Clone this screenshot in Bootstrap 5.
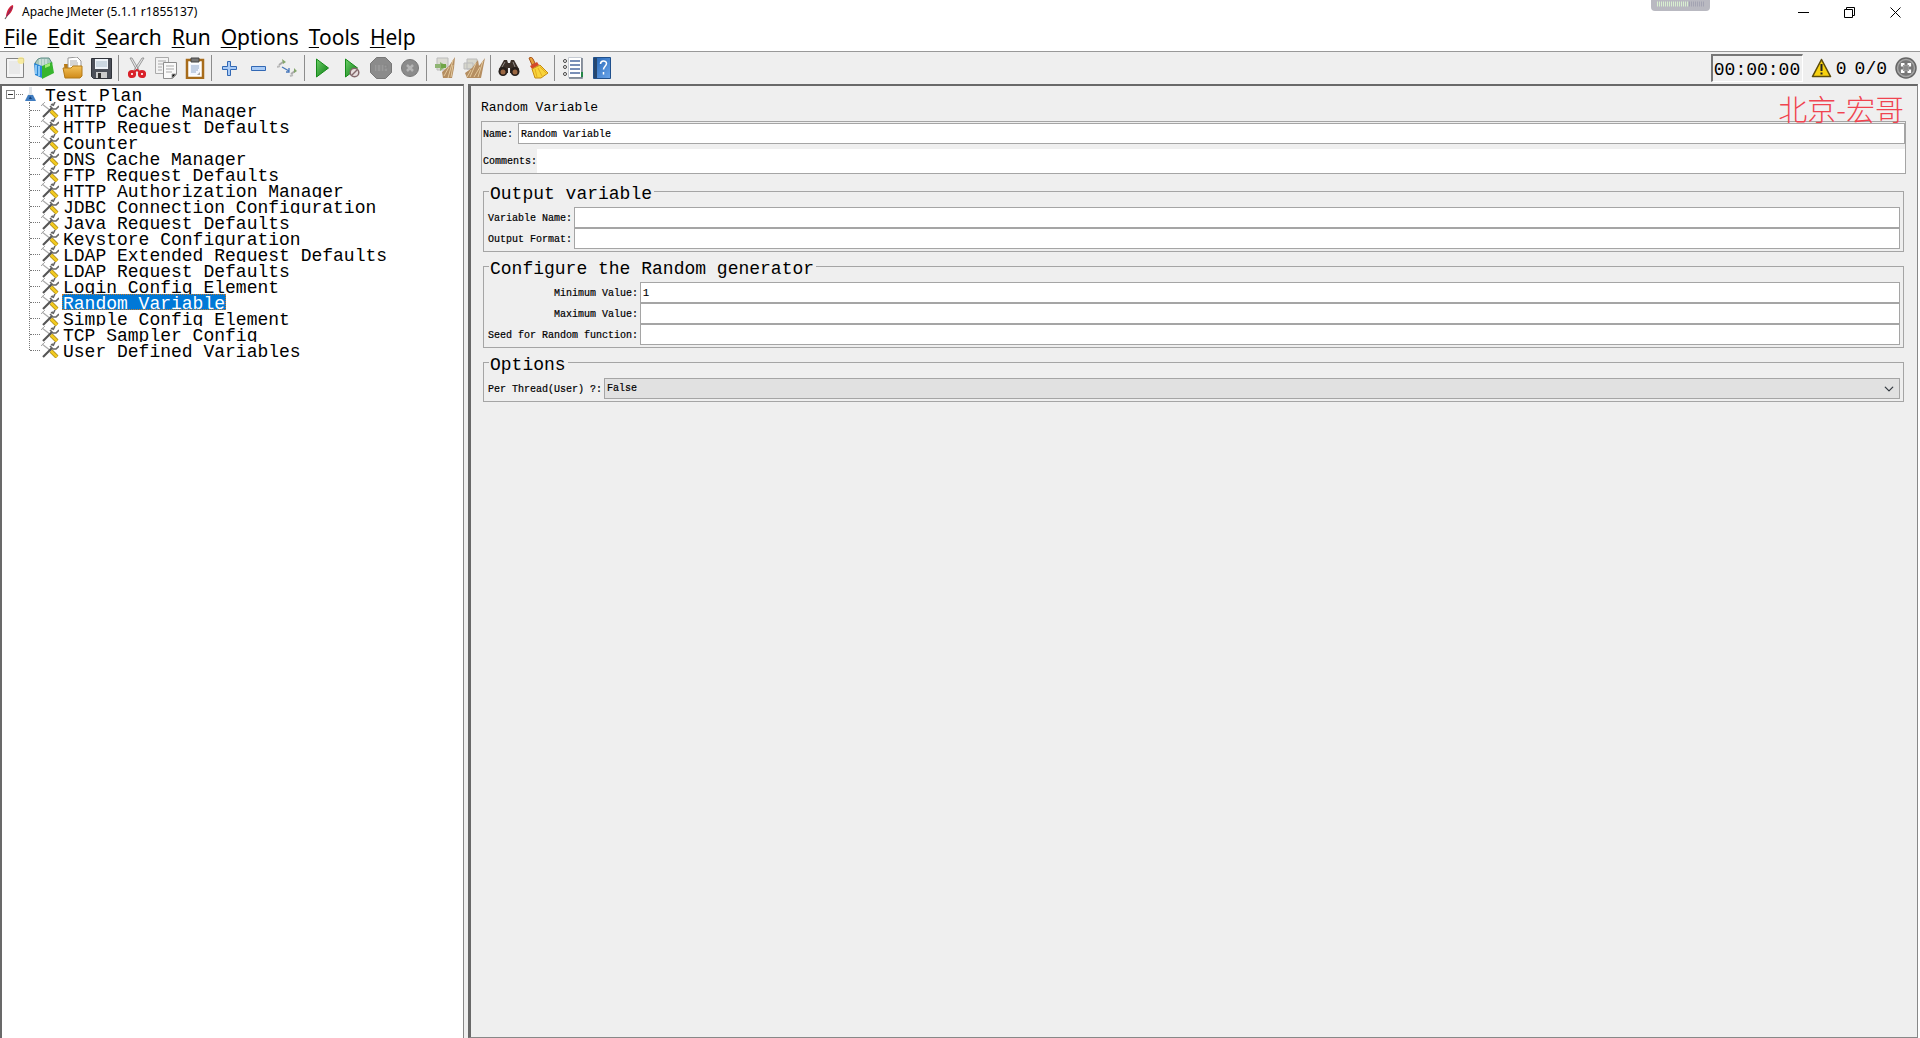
<!DOCTYPE html>
<html lang="en">
<head>
<meta charset="utf-8">
<meta name="viewport" content="width=device-width, initial-scale=1">
<title>Apache JMeter (5.1.1 r1855137)</title>
<link href="https://cdn.jsdelivr.net/npm/bootstrap@5.3.0/dist/css/bootstrap.min.css" rel="stylesheet">
<style>
:root{--face:#efefef;--edge:#a5a5a5;--shade:#696969}
body{font-family:"Noto Sans","Open Sans",sans-serif;color:#000;background:#fff;line-height:1}
.mono{font-family:"Liberation Mono","Noto Sans CJK SC",monospace}
svg{display:block;flex:none}
.titlebar{height:24px;font-size:12px;padding:0 2px 0 4px}
.title-text{padding-left:6px}
.win-btn{width:46px;height:20px;background:none;border:0;padding:0}
.gauge{position:absolute;top:0;right:210px;width:59px;height:11px;background:#b9b9c1;border-radius:0 0 4px 4px}
.menubar{height:28px;font-size:21px;border-bottom:1px solid #999;padding-left:4px;gap:10px}
.menubar a{color:#000;text-decoration:none;line-height:26px}
.menubar u{text-underline-offset:2px;text-decoration-thickness:1px}
.toolbar{height:32px;background:var(--face)}
.tool{width:29px;height:32px;background:none;border:0;padding:0}
.split{width:1px;height:26px;background:#8c8c8c;margin:0 3px 0 2px}
.clock{height:28px;width:92px;line-height:28px;padding-left:1px;font-size:18px;border:solid;border-width:2px 1px 1px 2px;border-color:#777 #fff #fff #777}
.status{font-size:18px;padding-right:3px}
.status-count{line-height:22px;padding-top:2px}
.tree-pane{width:464px;border-top:2px solid var(--shade);border-left:2px solid var(--shade);border-right:1px solid #888;background:#fff}
.gutter{width:4px;background:var(--face)}
.tree{font-size:18px;margin:0;padding:0;list-style:none}
.tree-row{height:16px;overflow:hidden;display:flex;align-items:center}
.tree-label{height:16px;line-height:20px;white-space:nowrap;padding:0 1px}
.kids{margin:0 0 0 28px;padding:0;list-style:none;position:relative}
.kids::before{content:"";position:absolute;left:-1px;top:0;bottom:8px;border-left:1px dotted #777}
.kids .tree-row::before{content:"";width:10px;border-top:1px dotted #777;margin-right:1px}
.kids .tree-label{margin-left:3px}
.picked{background:#0078d7;color:#fff;outline:1px dotted #c77a2a;outline-offset:-1px}
.expander{width:9px;height:9px;border:1px solid #848484;background:#fff;padding:0;margin-left:4px}
.stub{width:7px;border-top:1px dotted #777;margin:0 2px 0 1px}
.editor{border:solid;border-width:2px 1px 1px 3px;border-color:var(--shade) #888 #888 var(--shade);margin-right:2px;background:var(--face);padding:0 11px 0 10px;font-size:10px}
.editor-head{font-size:13px;height:35px;line-height:20px;padding-top:12px;font-weight:400;margin:0}
.author{position:absolute;top:6px;right:13px;font-size:29px;line-height:32px;color:#f04450;font-weight:300;font-family:"Noto Sans CJK SC",sans-serif}
.ident{border:1px solid var(--edge);height:53px;background:var(--face)}
.ident label,.pairs label{padding:2px 0 0 1px;-webkit-text-stroke:.2px #000}
.ident input,.pairs input,.pairs select{font:inherit;color:#000;border-radius:0;border:1px solid var(--edge);padding:1px 0 0 2px;min-height:0;height:21px;line-height:18px;background-color:#fff;-webkit-text-stroke:.2px #000}
.ident .remark{border:0;height:24px}
.name-row{padding-top:1px}
.name-row label{padding-right:5px}
.group{border:1px solid var(--edge);margin:6px 2px 0;padding:5px 3px 2px 4px}
.group+.group{margin-top:3px}
.group legend{float:none;width:auto;font-size:18px;line-height:28px;height:22px;margin:0 0 0 1px;padding:0 2px 0 1px}
.pairs{display:grid;grid-template-columns:auto 1fr;align-items:center;text-align:right;column-gap:2px}
.pairs label{padding-left:0}
.pairs select{background-color:#e1e1e1;background-size:10px;background-position:right 5px center}
</style>
<script src="https://cdn.jsdelivr.net/npm/bootstrap@5.3.0/dist/js/bootstrap.bundle.min.js"></script>
</head>
<body class="d-flex flex-column vh-100 overflow-hidden position-relative">
<svg width="0" height="0" class="position-absolute">
 <defs>
 <linearGradient id="gGreen" x2="1" y2="1"><stop stop-color="#6fd06a"/><stop offset="1" stop-color="#087a10"/></linearGradient>
 <linearGradient id="gGold" y2="1" x2="0"><stop stop-color="#f4c35a"/><stop offset="1" stop-color="#d08a18"/></linearGradient>
 <linearGradient id="gBlue" x2="1" y2="1"><stop stop-color="#2464b4"/><stop offset="1" stop-color="#6aa5ea"/></linearGradient>
 </defs>
 <symbol id="tools" viewBox="0 0 18 16"><path d="M1 2l9 7" stroke="#aaa" stroke-width="1.2"/><path d="M0 4l4-4" stroke="#aaa"/><path d="M2 15l9-9" stroke="#555" stroke-width="2.2"/><path d="M9 4l3 3h3l3-3M10 3l2-1M14 0l-2 4" stroke="#666" stroke-width="1.6" fill="none"/><path d="M10 9l6 6" stroke="#9a7a10" stroke-width="4"/><path d="M10 9l6 6" stroke="#f2ca20" stroke-width="2.800"/></symbol>
</svg>

<header>
 <div class="titlebar d-flex align-items-center">
  <svg width="12" height="17" viewBox="0 0 12 17"><path d="M1 15l2-3" stroke="#666" stroke-width="1.2"/><path d="M2 13C2 8 5 2 9 1c1 3-2 9-7 12z" fill="#d0223a"/><path d="M3 12L8 3" stroke="#7c2a6a"/></svg>
  <span class="title-text me-auto">Apache JMeter (5.1.1 r1855137)</span>
  <div class="gauge"><svg width="59" height="11"><path d="M6 4h31" stroke="#d8efd0" stroke-width="5" stroke-dasharray="1 1"/><path d="M38 4h16" stroke="#a3a3b2" stroke-width="5" stroke-dasharray="1 1"/></svg></div>
  <button class="win-btn d-flex align-items-center justify-content-center" aria-label="Minimize"><svg width="11" height="11"><path d="M0 5.5h11" stroke="#000"/></svg></button>
  <button class="win-btn d-flex align-items-center justify-content-center" aria-label="Restore"><svg width="11" height="11" fill="none" stroke="#000"><path d="M.5 2.5h8v8h-8zM2.500 2.500v-2h8v8h-2"/></svg></button>
  <button class="win-btn d-flex align-items-center justify-content-center" aria-label="Close"><svg width="11" height="11"><path d="M.5.5l10 10M10.500.5l-10 10" stroke="#000"/></svg></button>
 </div>
 <nav class="menubar d-flex align-items-start">
  <a href="#"><u>F</u>ile</a><a href="#"><u>E</u>dit</a><a href="#"><u>S</u>earch</a><a href="#"><u>R</u>un</a><a href="#"><u>O</u>ptions</a><a href="#"><u>T</u>ools</a><a href="#"><u>H</u>elp</a>
 </nav>
 <div class="toolbar d-flex align-items-center">
  <button class="tool d-flex align-items-center justify-content-center" aria-label="New"><svg width="20" height="22" viewBox="0 0 20 22"><path d="M1.500 1.500h17v19h-17z" fill="#f4f4f4" stroke="#858585"/><path d="M4 4h11v13H4z" fill="#e9e9e9"/><circle cx="16" cy="3.500" r="3.500" fill="#f8e98c" opacity=".8"/></svg></button>
  <button class="tool d-flex align-items-center justify-content-center" aria-label="Templates"><svg width="22" height="22" viewBox="0 0 22 22"><path d="M2 6l3-4 3-1 8 0 3 5-2 4H6z" fill="#a7c8bd" stroke="#5f8c86"/><path d="M7 2v7M10 2v7M13 2v6" stroke="#e8f0f0"/><path d="M1 6l8 3v12l-7-3z" fill="#2a87d5"/><path d="M3 8v9M6 9v10" stroke="#a6dcff" stroke-width="1.500"/><path d="M9 9l10-4 2 11-12 6z" fill="#37b52e"/><path d="M12 8l5-2v3l-5 2z" fill="#a4ed79"/></svg></button>
  <button class="tool d-flex align-items-center justify-content-center" aria-label="Open"><svg width="22" height="22" viewBox="0 0 22 22"><path d="M2 7h6l1 2h10v12H3z" fill="#b97a14"/><path d="M6 1l9-1 4 4v9H6z" fill="#fff" stroke="#999"/><path d="M8 4h7M8 6h8M8 8h8" stroke="#aaa"/><path d="M1 11h8l2-2h9v10l-2 2H3z" fill="url(#gGold)" stroke="#b37b18"/></svg></button>
  <button class="tool d-flex align-items-center justify-content-center" aria-label="Save"><svg width="21" height="21" viewBox="0 0 21 21"><path d="M.5.5h20v20h-18l-2-2z" fill="#4b4f58" stroke="#30333a"/><path d="M4 1h13v10H4z" fill="#eef3f8"/><path d="M5 4h11M5 6h11M5 8h11" stroke="#a9bccb"/><path d="M5 14h11v6H5z" fill="#ccc"/><path d="M7 15h3v5H7z" fill="#333"/></svg></button>
  <i class="split"></i>
  <button class="tool d-flex align-items-center justify-content-center" aria-label="Cut"><svg width="18" height="22" viewBox="0 0 18 22"><path d="M2 1l2 0 7 12-2 1zM16 1h-2L6 13l2 1z" fill="#e4e4e4" stroke="#888" stroke-width=".8"/><g fill="#fff" stroke="#d9222a" stroke-width="3"><circle cx="4" cy="17" r="2.600"/><circle cx="14" cy="17" r="2.600"/></g><path d="M6 15l3-2 3 2" stroke="#d9222a" stroke-width="2" fill="none"/></svg></button>
  <button class="tool d-flex align-items-center justify-content-center" aria-label="Copy"><svg width="22" height="22" viewBox="0 0 22 22" stroke="#aaa"><path d="M.5.5h13v16H.5z" fill="#f3f3f3"/><path d="M3 4h8M3 7h8M3 10h4M3 13h4"/><path d="M8.500 5.500h13v12l-4 4h-9z" fill="#fafafa" stroke="#8e8e8e"/><path d="M11 9h8M11 12h8M11 15h6M17 21v-4h4"/></svg></button>
  <button class="tool d-flex align-items-center justify-content-center" aria-label="Paste"><svg width="20" height="22" viewBox="0 0 20 22"><path d="M2 3h16v18H2z" fill="#fff" stroke="#a76c1c" stroke-width="2.500"/><path d="M6 1h8v4H6z" fill="#777" stroke="#444"/><path d="M5 7h10v11H5z" fill="#f4f7ff"/><path d="M6 9h8M6 11h8M6 13h7M6 15h5" stroke="#92a9ca"/><path d="M12 18l3-3v3z" fill="#aaa"/></svg></button>
  <i class="split"></i>
  <button class="tool d-flex align-items-center justify-content-center" aria-label="Expand all"><svg width="15" height="15" viewBox="0 0 15 15"><path d="M5.500.5h3v5h6v3h-6v6h-3v-6h-5v-3h5z" fill="#a9cbf6" stroke="#3268b4"/></svg></button>
  <button class="tool d-flex align-items-center justify-content-center" aria-label="Collapse all"><svg width="15" height="15" viewBox="0 0 15 15"><path d="M.5 5.500h14v4H.5z" fill="#a9cbf6" stroke="#3268b4"/></svg></button>
  <button class="tool d-flex align-items-center justify-content-center" aria-label="Toggle"><svg width="21" height="20" viewBox="0 0 21 20"><path d="M2 7l4-3M14 16l4-3" stroke="#aaa" stroke-width="2"/><path d="M5 1l4 3-3 2zM17 10l3 3-3 2z" fill="#84a56b"/><path d="M0 9l3-1M13 18l3-1" stroke="#bbb" stroke-width="2"/><path d="M5 9l7 4m0-3v4H9" fill="none" stroke="#4777bb" stroke-width="1.300"/></svg></button>
  <i class="split"></i>
  <button class="tool d-flex align-items-center justify-content-center" aria-label="Start"><svg width="15" height="20" viewBox="0 0 15 20"><path d="M1.500 1l12 9-12 9z" fill="url(#gGreen)" stroke="#168b1a"/></svg></button>
  <button class="tool d-flex align-items-center justify-content-center" aria-label="Start no pauses"><svg width="16" height="20" viewBox="0 0 16 20"><path d="M1.500 1l12 9-12 9z" fill="url(#gGreen)" stroke="#168b1a"/><circle cx="10.500" cy="14.500" r="4.300" fill="#e7dede" stroke="#84686c" stroke-width="1.500"/><path d="M7.500 17.500l6-6" stroke="#84686c" stroke-width="1.500"/></svg></button>
  <button class="tool d-flex align-items-center justify-content-center" aria-label="Stop" disabled><svg width="22" height="22" viewBox="0 0 22 22"><path d="M6.500.5h9l6 6v9l-6 6h-9l-6-6v-9z" fill="#8b8b8b" stroke="#777"/><path d="M5 8h12v6H5z" fill="#999"/><path d="M7 8v6M11 8v6M14 14V8h3v3h-3" stroke="#848484" fill="none"/></svg></button>
  <button class="tool d-flex align-items-center justify-content-center" aria-label="Shutdown" disabled><svg width="18" height="18" viewBox="0 0 18 18"><circle cx="9" cy="9" r="8.500" fill="#8b8b8b" stroke="#777"/><path d="M6 6l6 6M12 6l-6 6" stroke="#b4b4b4" stroke-width="2.500"/></svg></button>
  <i class="split"></i>
  <button class="tool d-flex align-items-center justify-content-center" aria-label="Clear"><svg width="21" height="22" viewBox="0 0 21 22"><path d="M3 1h11v12H3z" fill="#dcdcd4" stroke="#bbb"/><path d="M1 7h5V5l7 4-7 5v-3H1z" fill="#8fb573"/><path d="M7 7h5v4H7z" fill="#6fa545"/><path d="M21 0l-6 9-7 6 1 6h9l2-10z" fill="#b58e61"/><path d="M19 3l-5 18M15 10l-5 9M19 8l-2 12" stroke="#e3c99c"/></svg></button>
  <button class="tool d-flex align-items-center justify-content-center" aria-label="Clear all"><svg width="22" height="22" viewBox="0 0 22 22"><path d="M4 2h10v10H4zM1 6h9v6H1z" fill="#d6d6cc" stroke="#bbb"/><path d="M15 3l-6 8-7 5 2 5h14l2-10 2-10-6 8z" fill="#b58e61"/><path d="M13 6L7 20M20 4l-5 16M8 13l-4 7M17 10l-6 10" stroke="#e3c99c"/></svg></button>
  <i class="split"></i>
  <button class="tool d-flex align-items-center justify-content-center" aria-label="Search"><svg width="22" height="18" viewBox="0 0 22 18"><path d="M6 1h3l1 3h2l1-3h3l5 9v4H12V9h-2v5H1v-4z" fill="#3b3029"/><circle cx="5" cy="12.500" r="4.500" fill="#251e1a"/><circle cx="17" cy="12.500" r="4.500" fill="#251e1a"/><circle cx="5" cy="13" r="2.500" fill="#9b6742"/><circle cx="17" cy="13" r="2.500" fill="#9b6742"/><path d="M7 3L4 8M15 3l2 5" stroke="#8f8a86"/></svg></button>
  <button class="tool d-flex align-items-center justify-content-center" aria-label="Reset search"><svg width="22" height="22" viewBox="0 0 22 22"><path d="M2 1q3-2 4 1l2 4-3 2z" fill="#e8a03a" stroke="#a6521a"/><path d="M3 9l7-4 2 3-7 4z" fill="#d64829"/><path d="M5 12l8-4 8 8-7 5H8z" fill="#f8d43a" stroke="#c58a12"/><path d="M8 12l2 8M11 11l4 8M13 10l6 6" stroke="#e4ac22"/></svg></button>
  <i class="split"></i>
  <button class="tool d-flex align-items-center justify-content-center" aria-label="Function helper"><svg width="22" height="22" viewBox="0 0 22 22"><path d="M6.500.5h13v20h-13z" fill="#fff" stroke="#c5cad2"/><path d="M20 1v20H7" stroke="#6e7886" fill="none" stroke-width="1.500"/><path d="M8 4h10M8 8h10M8 12h10M8 16h10" stroke="#4e6ba0" stroke-width="1.500"/><g fill="#fff" stroke="#444"><circle cx="3" cy="4" r="1.500"/><circle cx="3" cy="10" r="1.500"/><circle cx="3" cy="17" r="1.500"/></g><path d="M19 15h2v5h-2z" fill="#238648"/></svg></button>
  <button class="tool d-flex align-items-center justify-content-center" aria-label="Help"><svg width="18" height="22" viewBox="0 0 18 22"><path d="M.5.5h17v21H.5z" fill="url(#gBlue)" stroke="#20508c"/><path d="M1 1h3v20H1z" fill="#26466e"/><path d="M7.500 7c0-4 6-4 6-.5 0 2.500-3 3-3 6M10.500 15v2.500" fill="none" stroke="#fff" stroke-width="1.500"/></svg></button>
  <div class="ms-auto d-flex align-items-center status mono">
   <span class="clock">00:00:00</span>
   <svg class="ms-2" width="21" height="20" viewBox="0 0 21 20"><path d="M10.500 1.500l9 17h-18z" fill="#f8d210" stroke="#5d4c0a" stroke-width="1.600" stroke-linejoin="round"/><path d="M10.500 6v7M10.500 14.500v2" stroke="#222" stroke-width="2"/></svg>
   <span class="ms-1 status-count">0</span><span class="ms-2 status-count">0/0</span>
   <svg class="ms-2" width="22" height="22" viewBox="0 0 22 22"><circle cx="11" cy="11" r="10" fill="#a5a5a5" stroke="#666" stroke-width="1.500"/><circle cx="11" cy="11" r="5.500" fill="none" stroke="#777" stroke-width="4.500"/><path d="M7 9.500V7h2.500M12.500 7H15v2.500M15 12.500V15h-2.500M9.500 15H7v-2.500" fill="none" stroke="#fff" stroke-width="2.200"/><circle cx="11" cy="11" r="2.500" fill="#8c8c8c"/></svg>
  </div>
 </div>
</header>

<main class="d-flex flex-grow-1 mono">
 <aside class="tree-pane flex-shrink-0">
  <ul class="tree">
   <li>
    <div class="tree-row"><button class="expander d-flex align-items-center justify-content-center" aria-label="Collapse"><svg width="5" height="1"><path d="M0 .5h5" stroke="#333"/></svg></button><i class="stub"></i><svg width="11" height="16" viewBox="0 0 11 16"><path d="M4 1h3v6l4 7H0l4-7z" fill="#dfe5ea"/><path d="M3 9h5l3 6H0z" fill="#3f7cc0"/><path d="M5 10l2 3H4z" fill="#123f78"/></svg><span class="tree-label ms-2">Test Plan</span></div>
    <ul class="kids">
     <li class="tree-row"><svg width="18" height="16"><use href="#tools"/></svg><span class="tree-label">HTTP Cache Manager</span></li>
     <li class="tree-row"><svg width="18" height="16"><use href="#tools"/></svg><span class="tree-label">HTTP Request Defaults</span></li>
     <li class="tree-row"><svg width="18" height="16"><use href="#tools"/></svg><span class="tree-label">Counter</span></li>
     <li class="tree-row"><svg width="18" height="16"><use href="#tools"/></svg><span class="tree-label">DNS Cache Manager</span></li>
     <li class="tree-row"><svg width="18" height="16"><use href="#tools"/></svg><span class="tree-label">FTP Request Defaults</span></li>
     <li class="tree-row"><svg width="18" height="16"><use href="#tools"/></svg><span class="tree-label">HTTP Authorization Manager</span></li>
     <li class="tree-row"><svg width="18" height="16"><use href="#tools"/></svg><span class="tree-label">JDBC Connection Configuration</span></li>
     <li class="tree-row"><svg width="18" height="16"><use href="#tools"/></svg><span class="tree-label">Java Request Defaults</span></li>
     <li class="tree-row"><svg width="18" height="16"><use href="#tools"/></svg><span class="tree-label">Keystore Configuration</span></li>
     <li class="tree-row"><svg width="18" height="16"><use href="#tools"/></svg><span class="tree-label">LDAP Extended Request Defaults</span></li>
     <li class="tree-row"><svg width="18" height="16"><use href="#tools"/></svg><span class="tree-label">LDAP Request Defaults</span></li>
     <li class="tree-row"><svg width="18" height="16"><use href="#tools"/></svg><span class="tree-label">Login Config Element</span></li>
     <li class="tree-row"><svg width="18" height="16"><use href="#tools"/></svg><span class="tree-label picked">Random Variable</span></li>
     <li class="tree-row"><svg width="18" height="16"><use href="#tools"/></svg><span class="tree-label">Simple Config Element</span></li>
     <li class="tree-row"><svg width="18" height="16"><use href="#tools"/></svg><span class="tree-label">TCP Sampler Config</span></li>
     <li class="tree-row"><svg width="18" height="16"><use href="#tools"/></svg><span class="tree-label">User Defined Variables</span></li>
    </ul>
   </li>
  </ul>
 </aside>
 <div class="gutter flex-shrink-0"></div>
 <section class="editor flex-grow-1 position-relative">
  <h1 class="editor-head">Random Variable</h1>
  <span class="author">北京-宏哥</span>
  <div class="ident d-flex flex-column justify-content-between">
   <div class="name-row d-flex align-items-center"><label for="name">Name:</label><input id="name" class="form-control" value="Random Variable"></div>
   <div class="d-flex align-items-center"><label for="comments">Comments:</label><input id="comments" class="form-control remark"></div>
  </div>
  <fieldset class="group"><legend>Output variable</legend>
   <div class="pairs">
    <label for="var">Variable Name:</label><input id="var" class="form-control">
    <label for="fmt">Output Format:</label><input id="fmt" class="form-control">
   </div>
  </fieldset>
  <fieldset class="group"><legend>Configure the Random generator</legend>
   <div class="pairs">
    <label for="min">Minimum Value:</label><input id="min" class="form-control" value="1">
    <label for="max">Maximum Value:</label><input id="max" class="form-control">
    <label for="seed">Seed for Random function:</label><input id="seed" class="form-control">
   </div>
  </fieldset>
  <fieldset class="group"><legend>Options</legend>
   <div class="pairs">
    <label for="per">Per Thread(User) ?:</label><select id="per" class="form-select"><option>False</option><option>True</option></select>
   </div>
  </fieldset>
 </section>
</main>
</body>
</html>
